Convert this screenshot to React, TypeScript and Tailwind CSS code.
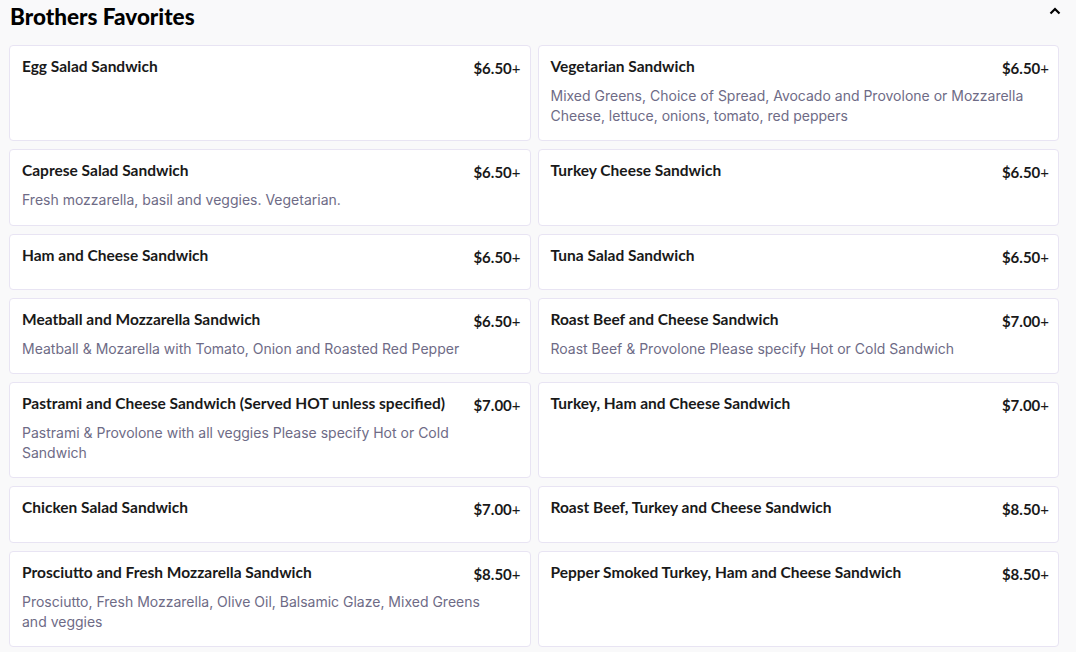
import React from "react";

type Item = { name: string; price: string; desc?: string };

const items: Item[] = [
  { name: "Egg Salad Sandwich", price: "$6.50" },
  {
    name: "Vegetarian Sandwich",
    price: "$6.50",
    desc: "Mixed Greens, Choice of Spread, Avocado and Provolone or Mozzarella Cheese, lettuce, onions, tomato, red peppers",
  },
  { name: "Caprese Salad Sandwich", price: "$6.50", desc: "Fresh mozzarella, basil and veggies. Vegetarian." },
  { name: "Turkey Cheese Sandwich", price: "$6.50" },
  { name: "Ham and Cheese Sandwich", price: "$6.50" },
  { name: "Tuna Salad Sandwich", price: "$6.50" },
  {
    name: "Meatball and Mozzarella Sandwich",
    price: "$6.50",
    desc: "Meatball & Mozarella with Tomato, Onion and Roasted Red Pepper",
  },
  {
    name: "Roast Beef and Cheese Sandwich",
    price: "$7.00",
    desc: "Roast Beef & Provolone Please specify Hot or Cold Sandwich",
  },
  {
    name: "Pastrami and Cheese Sandwich (Served HOT unless specified)",
    price: "$7.00",
    desc: "Pastrami & Provolone with all veggies Please specify Hot or Cold Sandwich",
  },
  { name: "Turkey, Ham and Cheese Sandwich", price: "$7.00" },
  { name: "Chicken Salad Sandwich", price: "$7.00" },
  { name: "Roast Beef, Turkey and Cheese Sandwich", price: "$8.50" },
  {
    name: "Prosciutto and Fresh Mozzarella Sandwich",
    price: "$8.50",
    desc: "Prosciutto, Fresh Mozzarella, Olive Oil, Balsamic Glaze, Mixed Greens and veggies",
  },
  { name: "Pepper Smoked Turkey, Ham and Cheese Sandwich", price: "$8.50" },
];

function Card({ item }: { item: Item }) {
  return (
    <div className="bg-white border border-[#e8e4f3] rounded-[4px] pl-3 pr-[9px] pt-[10px] pb-[14.3px]">
      <div className="flex items-start justify-between gap-3 min-h-[30px]">
        <div className="font-['Lato',sans-serif] font-bold text-[15.5px] leading-5 text-[#191919]">
          {item.name}
        </div>
        <div className="font-['Lato',sans-serif] text-[15px] leading-5 text-[#191919] whitespace-nowrap mt-[2px]">
          <span className="font-bold">{item.price}</span>
          <span className="font-normal">+</span>
        </div>
      </div>
      {item.desc && (
        <div className="font-['Inter',sans-serif] text-[14px] leading-5 text-[#6e6b86] pr-[14px]">
          {item.desc}
        </div>
      )}
    </div>
  );
}

export default function App() {
  return (
    <div className="w-[1076px] h-[652px] bg-[#f9f9fa] overflow-hidden">
      <div className="flex items-center justify-between pl-[10px] pr-[15px] h-[36px]">
        <h2 className="font-['Lato',sans-serif] font-black text-[22.5px] text-black leading-none -mt-[2px]">
          Brothers Favorites
        </h2>
        <svg width="12" height="8" viewBox="0 0 12 8" className="-mt-[15px]">
          <path d="M1.5 6.5 L6 2 L10.5 6.5" fill="none" stroke="#000" strokeWidth="2.2" />
        </svg>
      </div>
      <div className="grid grid-cols-2 gap-x-[7px] gap-y-2 pl-[9px] pr-[17px] pt-[9px]">
        {items.map((it) => (
          <Card key={it.name} item={it} />
        ))}
      </div>
    </div>
  );
}
